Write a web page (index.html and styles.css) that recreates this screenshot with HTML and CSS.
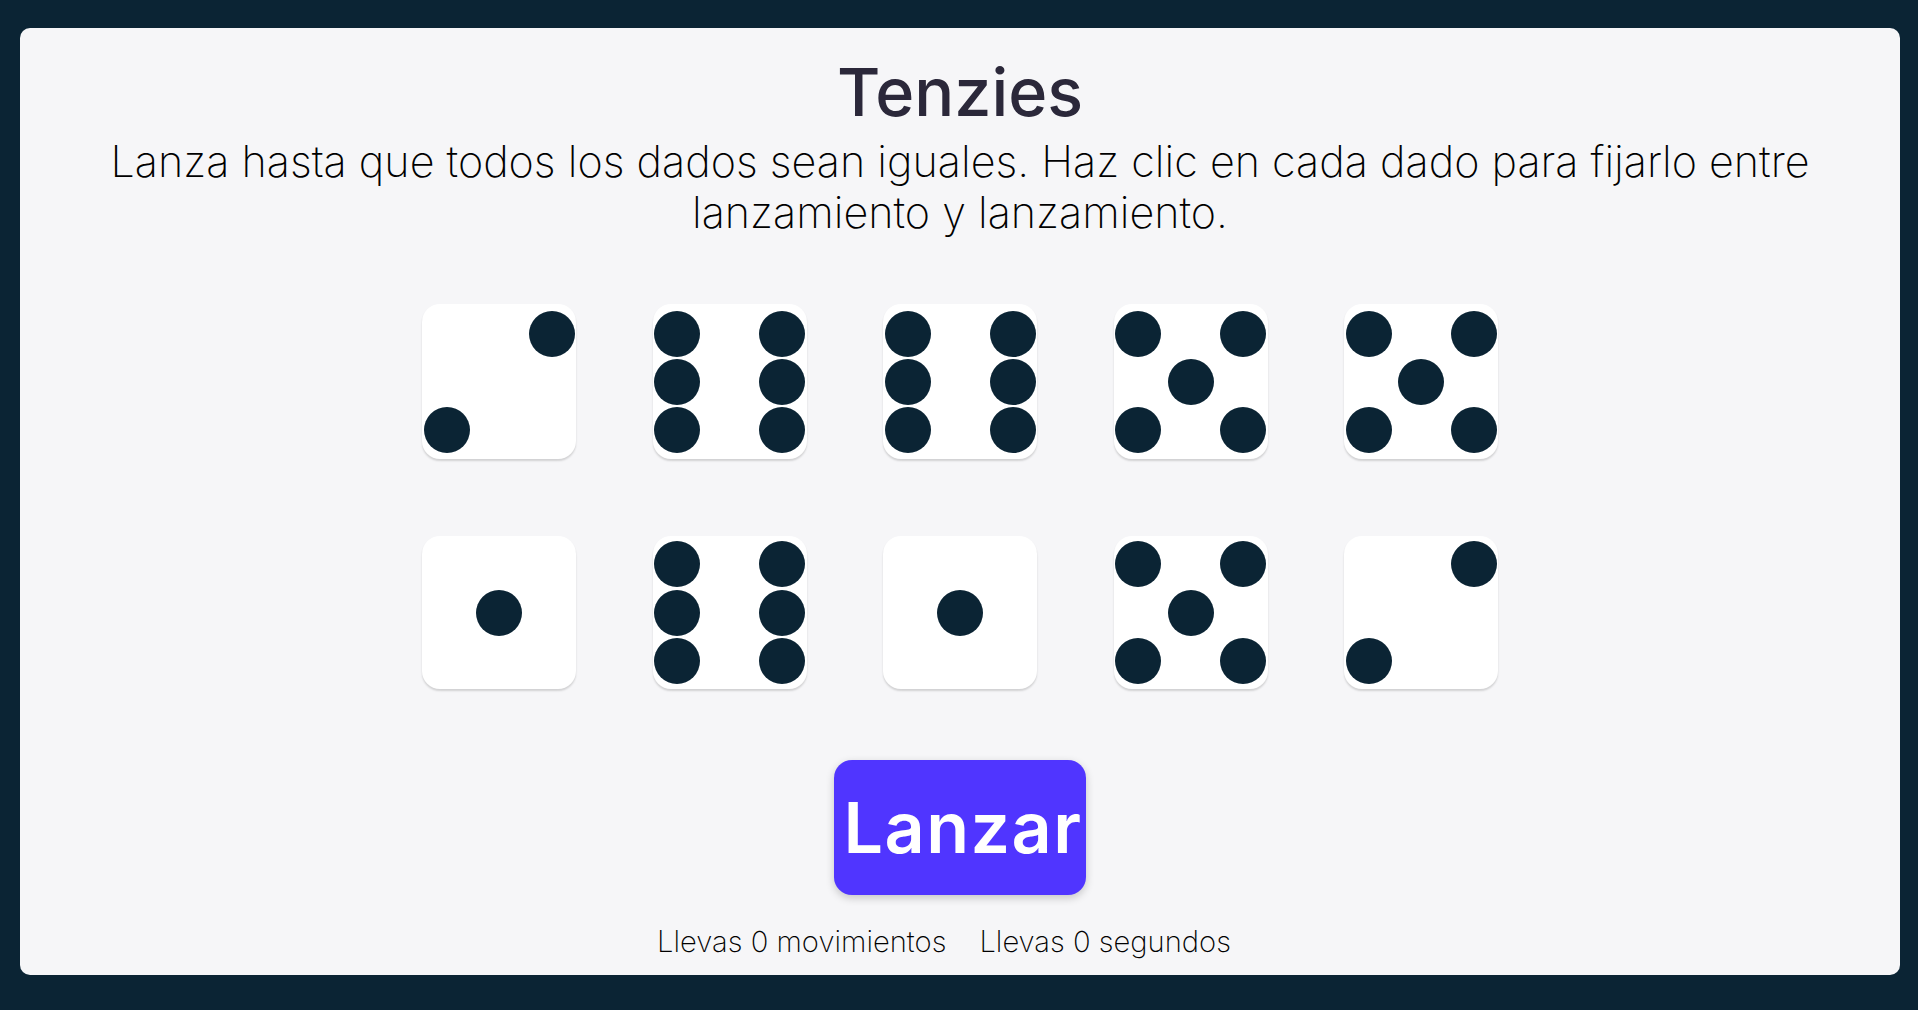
FILE: index.html
```html
<html>
    <head>
        <meta http-equiv="Content-Type" content="text/html; charset=utf-8">
        <meta name="viewport" content="width=device-width, initial-scale=1.0">
        <title>Tenzies</title>
        <link rel="stylesheet" href="styles.css">
    </head>
    <body>
        <main class="board">
            <h1 class="title">Tenzies</h1>
            <p class="instructions">Lanza hasta que todos los dados sean iguales. Haz clic en cada dado para fijarlo entre lanzamiento y lanzamiento.</p>
            <div class="dice">
                <div class="die"><span class="pip top right"></span><span class="pip bottom left"></span></div>
                <div class="die"><span class="pip top left"></span><span class="pip top right"></span><span class="pip middle left"></span><span class="pip middle right"></span><span class="pip bottom left"></span><span class="pip bottom right"></span></div>
                <div class="die"><span class="pip top left"></span><span class="pip top right"></span><span class="pip middle left"></span><span class="pip middle right"></span><span class="pip bottom left"></span><span class="pip bottom right"></span></div>
                <div class="die"><span class="pip top left"></span><span class="pip top right"></span><span class="pip middle center"></span><span class="pip bottom left"></span><span class="pip bottom right"></span></div>
                <div class="die"><span class="pip top left"></span><span class="pip top right"></span><span class="pip middle center"></span><span class="pip bottom left"></span><span class="pip bottom right"></span></div>
                <div class="die"><span class="pip middle center"></span></div>
                <div class="die"><span class="pip top left"></span><span class="pip top right"></span><span class="pip middle left"></span><span class="pip middle right"></span><span class="pip bottom left"></span><span class="pip bottom right"></span></div>
                <div class="die"><span class="pip middle center"></span></div>
                <div class="die"><span class="pip top left"></span><span class="pip top right"></span><span class="pip middle center"></span><span class="pip bottom left"></span><span class="pip bottom right"></span></div>
                <div class="die"><span class="pip top right"></span><span class="pip bottom left"></span></div>
            </div>
            <button class="rollButton">Lanzar</button>
            <div class="stats">
                <span>Llevas 0 movimientos</span>
                <span>Llevas 0 segundos</span>
            </div>
        </main>
    </body>
</html>
```

FILE: styles.css
```css
html, body{
    height: 100%;
    margin: 0;
}
body{
    box-sizing: border-box;
    padding: 28px 18px 35px 20px;
    background: #0b2434;
    font-family: "Inter", "Liberation Sans", sans-serif;
    overflow: hidden;
}
.board{
    height: 100%;
    box-sizing: border-box;
    padding: 24px 80px 0;
    display: flex;
    flex-direction: column;
    align-items: center;
    background: #f6f6f8;
    border-radius: 10px;
    text-align: center;
}
.title{
    margin: 0 0 3px;
    font-size: 66.5px;
    line-height: 81px;
    font-weight: 500;
    color: #2b283a;
}
.instructions{
    margin: 0;
    font-size: 43.1px;
    line-height: 51px;
    font-weight: 200;
    color: #000;
}
.dice{
    margin-top: 66px;
    display: grid;
    grid-template-columns: repeat(5, 154px);
    grid-template-rows: 155px 153px;
    column-gap: 76.5px;
    row-gap: 77px;
}
.die{
    box-sizing: border-box;
    padding: 7px 1.5px 6px;
    display: grid;
    grid-template-columns: repeat(3, 46px);
    grid-template-rows: repeat(3, 46px);
    justify-content: space-between;
    align-content: space-between;
    background: #fff;
    border-radius: 18px;
    box-shadow: 0 2px 2px rgba(0, 0, 0, 0.15);
}
.die:nth-child(n+6){
    padding-top: 5px;
    padding-bottom: 5px;
}
.pip{
    background: #0b2434;
    border-radius: 50%;
}
.top{ grid-row: 1; }
.middle{ grid-row: 2; }
.bottom{ grid-row: 3; }
.left{ grid-column: 1; }
.center{ grid-column: 2; }
.right{ grid-column: 3; }
.rollButton{
    margin-top: 71px;
    width: 252px;
    height: 135px;
    padding: 0 0 0 6px;
    border: none;
    border-radius: 18px;
    background: #5035ff;
    color: #fff;
    font-family: inherit;
    font-size: 70px;
    font-weight: 600;
    letter-spacing: 1.5px;
    box-shadow: 0 3px 8px rgba(0, 0, 0, 0.2);
}
.stats{
    margin-top: 30px;
    padding-right: 32px;
    display: flex;
    gap: 33px;
    font-size: 29.2px;
    line-height: 34px;
    font-weight: 200;
    color: #000;
}
```
